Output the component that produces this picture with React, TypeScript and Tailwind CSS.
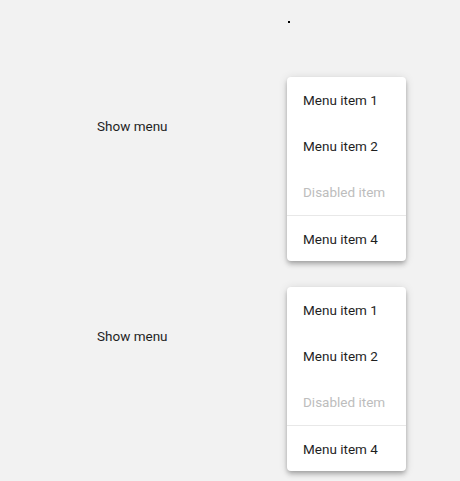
const items = [
  { label: 'Menu item 1' },
  { label: 'Menu item 2' },
  { label: 'Disabled item', disabled: true },
  { label: 'Menu item 4', divider: true },
];

function Menu() {
  return (
    <div className="w-[119px] overflow-hidden rounded-[4px] bg-white shadow-[0_2px_4px_-1px_rgba(0,0,0,0.2),0_4px_5px_0_rgba(0,0,0,0.14),0_1px_10px_0_rgba(0,0,0,0.12)]">
      {items.map((item) => (
        <div
          key={item.label}
          className={
            'flex h-[46px] items-center px-4 text-[13.5px] ' +
            (item.divider ? 'border-t border-[#e8e8e8] pt-px ' : '') +
            (item.disabled ? 'text-[#bdbdbd]' : 'text-[#1f1f1f]')
          }
        >
          {item.label}
        </div>
      ))}
    </div>
  );
}

function Row() {
  return (
    <div className="flex">
      <div className="w-[287px] pl-[97px] pt-[37px]">
        <span className="text-[13.5px] leading-5 text-[#1f1f1f]">Show menu</span>
      </div>
      <Menu />
    </div>
  );
}

export default function App() {
  return (
    <div className="h-[481px] overflow-hidden bg-[#f2f2f2] font-['Roboto','Liberation_Sans',sans-serif]">
      <div className="h-[77px] pl-[288px] pt-[21px]">
        <span className="block h-[2px] w-[2px] bg-black" />
      </div>
      <div className="flex flex-col gap-[26px]">
        <Row />
        <Row />
      </div>
    </div>
  );
}
